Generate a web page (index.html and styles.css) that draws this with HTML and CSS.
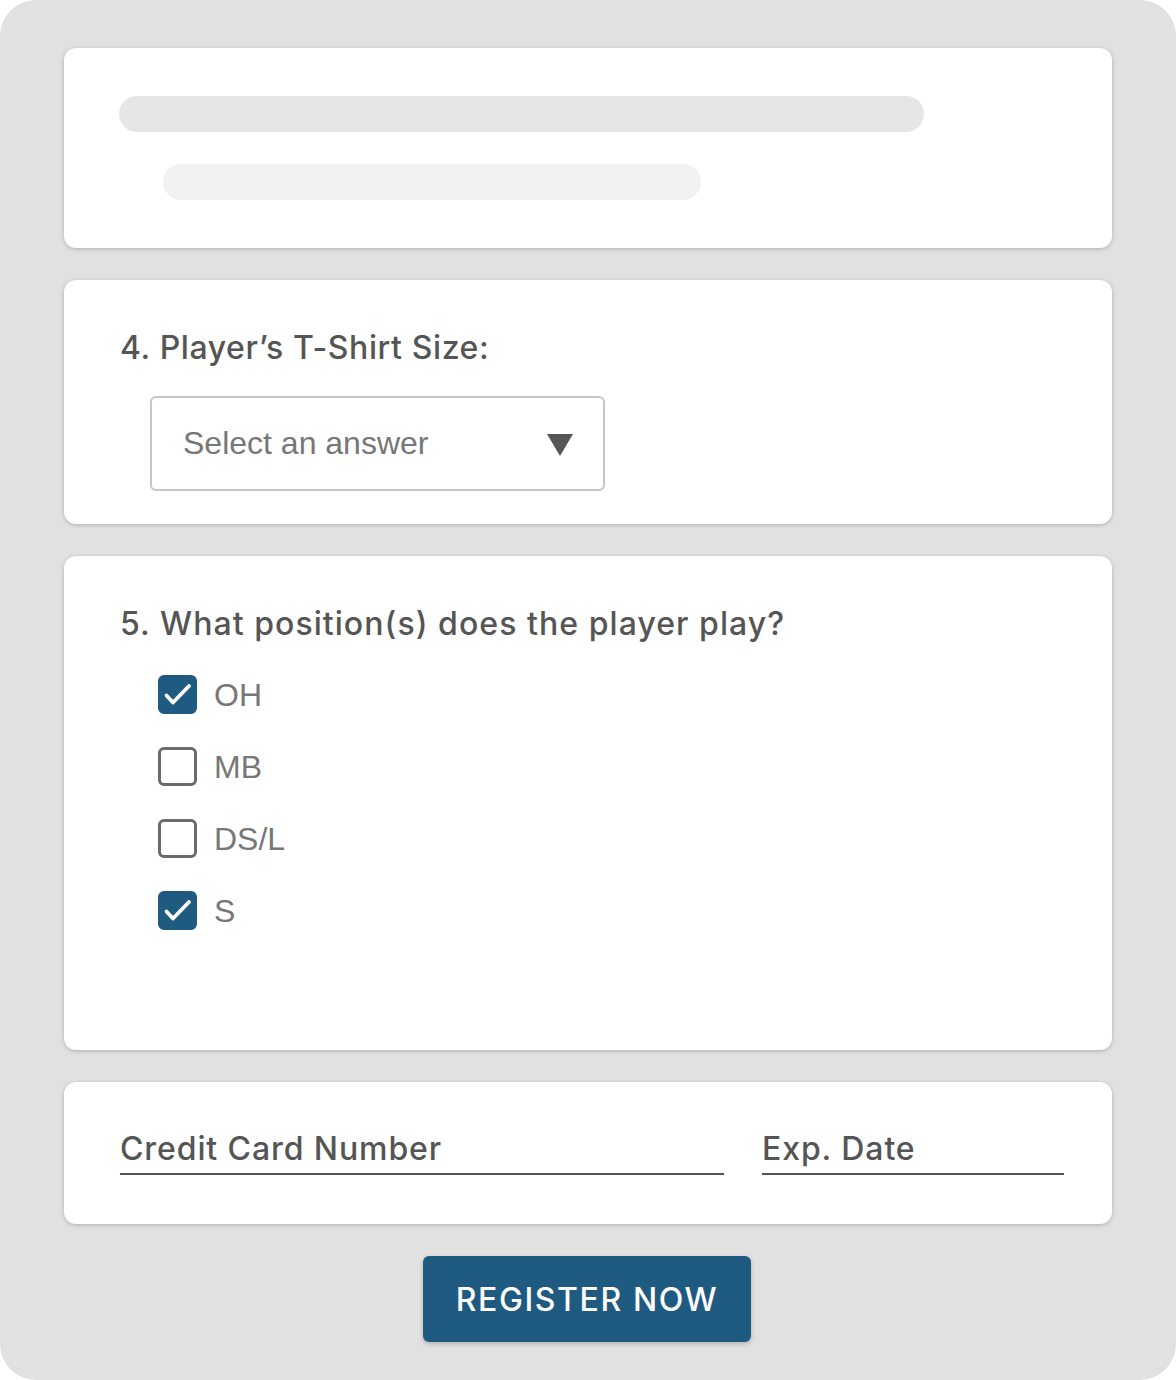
FILE: index.html
```html
<!DOCTYPE html>
<html>
<head>
<meta charset="utf-8">
<link rel="stylesheet" href="styles.css">
</head>
<body>
<div class="frame">
  <section class="card card-skeleton">
    <div class="bar bar-long"></div>
    <div class="bar bar-short"></div>
  </section>

  <section class="card card-q">
    <h2 class="question">4. Player’s T-Shirt Size:</h2>
    <div class="select">
      <span class="select-text">Select an answer</span>
      <svg class="caret" width="26" height="22" viewBox="0 0 26 22"><polygon points="0,0 26,0 13,22" fill="#555"/></svg>
    </div>
  </section>

  <section class="card card-positions">
    <h2 class="question q-wide">5. What position(s) does the player play?</h2>
    <ul class="options">
      <li class="option"><span class="box checked"><svg width="39" height="39" viewBox="0 0 39 39"><polyline points="8.5,20.5 15,27.5 31,11" fill="none" stroke="#fff" stroke-width="3.8" stroke-linecap="round" stroke-linejoin="round"/></svg></span><span class="opt-label">OH</span></li>
      <li class="option"><span class="box"></span><span class="opt-label">MB</span></li>
      <li class="option"><span class="box"></span><span class="opt-label">DS/L</span></li>
      <li class="option"><span class="box checked"><svg width="39" height="39" viewBox="0 0 39 39"><polyline points="8.5,20.5 15,27.5 31,11" fill="none" stroke="#fff" stroke-width="3.8" stroke-linecap="round" stroke-linejoin="round"/></svg></span><span class="opt-label">S</span></li>
    </ul>
  </section>

  <section class="card card-payment">
    <div class="field field-card">Credit Card Number</div>
    <div class="field field-exp">Exp. Date</div>
  </section>

  <div class="actions">
    <button class="register">REGISTER NOW</button>
  </div>
</div>
</body>
</html>
```

FILE: styles.css
```css
* { box-sizing: border-box; }
html, body { margin: 0; padding: 0; background: #ffffff; }
.frame {
  width: 1176px;
  height: 1380px;
  background: #e1e1e1;
  border-radius: 36px;
  padding: 48px 64px;
  display: flex;
  flex-direction: column;
  gap: 32px;
}
.card {
  background: #fff;
  border-radius: 12px;
  box-shadow: 0 1px 4px rgba(0,0,0,0.22);
  padding: 0 56px;
}
.card-skeleton { padding-top: 48px; padding-bottom: 48px; }
.bar { height: 36px; border-radius: 18px; }
.bar-long { width: 805px; background: #e6e6e6; margin-left: -1px; }
.bar-short { width: 538px; background: #f2f2f2; margin-top: 32px; margin-left: 43px; }

.question {
  margin: 0;
  font-family: "Inter", "Noto Sans", sans-serif;
  font-weight: 500;
  font-size: 32px;
  line-height: 36px;
  color: #555;
  letter-spacing: 0.6px;
}
.q-wide { letter-spacing: 1.05px; }
.card-q { padding-top: 50px; padding-bottom: 33px; }
.select {
  margin-top: 30px;
  margin-left: 30px;
  width: 455px;
  height: 95px;
  border: 2px solid #c6c6c6;
  border-radius: 6px;
  display: flex;
  align-items: center;
  justify-content: space-between;
  padding: 0 30px 0 31px;
}
.select-text {
  font-family: "Liberation Sans", Arial, sans-serif;
  font-size: 32px;
  color: #777;
}
.caret { display: block; margin-top: 2px; }

.card-positions { padding-top: 50px; padding-bottom: 120px; }
.options {
  list-style: none;
  margin: 33px 0 0 38px;
  padding: 0;
  display: flex;
  flex-direction: column;
  gap: 33px;
}
.option { display: flex; align-items: center; height: 39px; gap: 17px; }
.opt-label { position: relative; top: 1px; }
.box {
  width: 39px;
  height: 39px;
  border: 3px solid #6b6b6b;
  border-radius: 6px;
  display: block;
  position: relative;
  flex: none;
}
.box.checked { background: #1f5a80; border-color: #1f5a80; }
.box svg { position: absolute; left: -3px; top: -3px; }
.opt-label {
  font-family: "Liberation Sans", Arial, sans-serif;
  font-size: 32px;
  color: #777;
}

.card-payment {
  padding: 48px 48px 49px 56px;
  display: flex;
  gap: 38px;
}
.field {
  font-family: "Inter", "Noto Sans", sans-serif;
  font-weight: 500;
  font-size: 32px;
  line-height: 36px;
  color: #555;
  letter-spacing: 0.9px;
  padding-top: 1px;
  padding-bottom: 6px;
  border-bottom: 2px solid #555;
}
.field-card { width: 604px; }
.field-exp { width: 302px; }

.actions { display: flex; justify-content: center; }
.register {
  width: 328px;
  height: 86px;
  border: none;
  border-radius: 6px;
  background: #1f5a80;
  color: #fff;
  font-family: "Inter", "Noto Sans", sans-serif;
  font-weight: 500;
  font-size: 32px;
  letter-spacing: 1.6px;
  box-shadow: 0 2px 5px rgba(0,0,0,0.2);
  padding: 0;
  margin-left: -2px;
}
```
